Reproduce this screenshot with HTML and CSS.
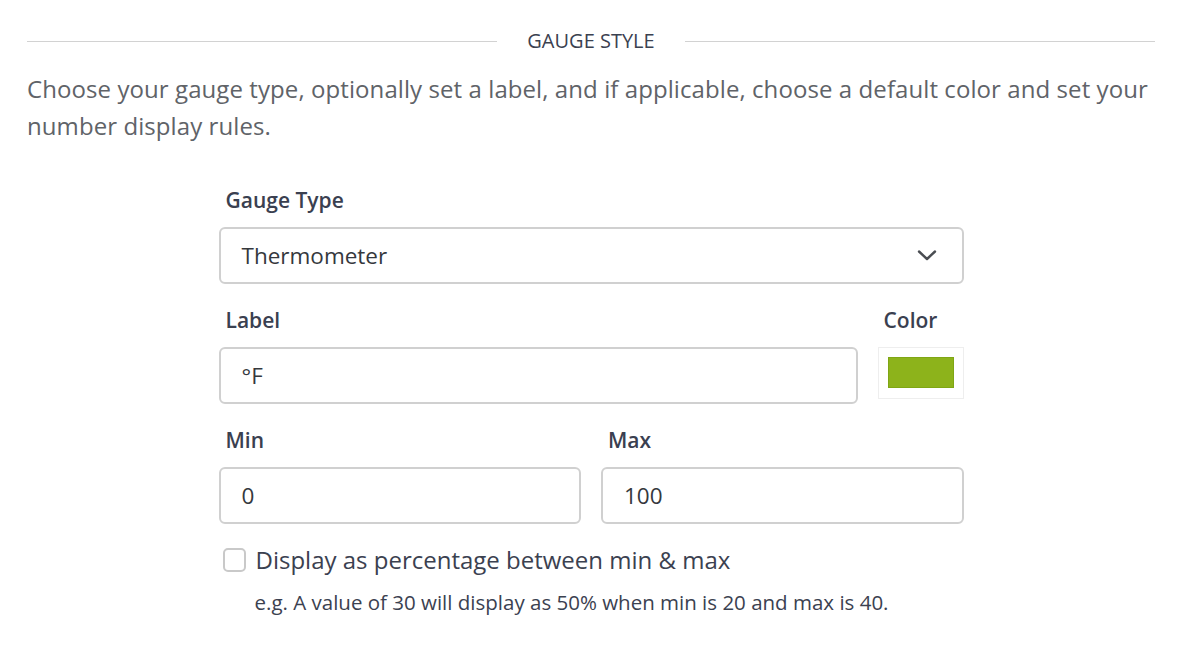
FILE: index.html
```html
<!DOCTYPE html>
<html lang="en">
<head>
<meta charset="utf-8">
<title>Gauge Style</title>
<link rel="stylesheet" href="styles.css">
</head>
<body>
<div class="page">
  <div class="section-head">
    <span class="rule"></span>
    <span class="head-text">GAUGE STYLE</span>
    <span class="rule"></span>
  </div>
  <p class="desc">Choose your gauge type, optionally set a label, and if applicable, choose a default color and set your number display rules.</p>

  <div class="form">
    <div class="field">
      <div class="label">Gauge Type</div>
      <div class="control select">
        <span>Thermometer</span>
        <svg class="chev" width="20" height="13" viewBox="0 0 20 13"><path d="M2 2.5 L10 10 L18 2.5" fill="none" stroke="#4a4d52" stroke-width="2.4" stroke-linecap="round" stroke-linejoin="round"/></svg>
      </div>
    </div>

    <div class="row">
      <div class="field grow">
        <div class="label">Label</div>
        <div class="control"><span>°F</span></div>
      </div>
      <div class="field color-field">
        <div class="label">Color</div>
        <div class="swatch-box"><div class="swatch"></div></div>
      </div>
    </div>

    <div class="row">
      <div class="field grow">
        <div class="label">Min</div>
        <div class="control"><span>0</span></div>
      </div>
      <div class="field grow">
        <div class="label">Max</div>
        <div class="control"><span>100</span></div>
      </div>
    </div>

    <div class="check-row">
      <span class="checkbox"></span>
      <span class="check-text">Display as percentage between min &amp; max</span>
    </div>
    <div class="help">e.g. A value of 30 will display as 50% when min is 20 and max is 40.</div>
  </div>
</div>
</body>
</html>
```

FILE: styles.css
```css
html, body {
  margin: 0;
  padding: 0;
  background: #ffffff;
}
body {
  font-family: "Open Sans", "Noto Sans", "Liberation Sans", sans-serif;
  color: #3b4150;
}
.page {
  width: 1128px;
  margin-left: 27px;
  padding-top: 29px;
}
.section-head {
  display: flex;
  align-items: center;
  height: 24px;
  gap: 30px;
}
.rule {
  flex: 1;
  height: 1px;
  background: #d2d2d2;
}
.head-text {
  font-size: 20px;
  line-height: 24px;
  color: #3b4150;
}
.desc {
  margin: 17px 0 0 0;
  font-size: 24px;
  letter-spacing: 0.08px;
  line-height: 37px;
  color: #606368;
}
.form {
  width: 745px;
  margin: 42px auto 0 auto;
  display: flex;
  flex-direction: column;
  gap: 22px;
}
.row {
  display: flex;
  gap: 20px;
}
.grow {
  flex: 1;
}
.label {
  font-size: 21px;
  font-weight: 600;
  line-height: 28px;
  padding-left: 7px;
  margin-bottom: 13px;
  color: #3a4050;
}
.control {
  box-sizing: border-box;
  height: 57px;
  border: 2px solid #d0d0d0;
  border-radius: 6px;
  display: flex;
  align-items: center;
  padding: 0 24px 0 21px;
  font-size: 22.5px;
  color: #35383d;
}
.select {
  justify-content: space-between;
}
.chev {
  display: block;
  margin-right: 1px;
}
.color-field {
  width: 86px;
}
.color-field .label {
  padding-left: 6px;
}
.swatch-box {
  box-sizing: border-box;
  height: 52px;
  border: 1px solid #eeeeee;
  padding: 9px;
}
.swatch {
  height: 31px;
  background: #8db31b;
  border: 1px solid #7fa614;
  box-sizing: border-box;
}
.check-row {
  display: flex;
  align-items: center;
  gap: 10px;
  padding-left: 4px;
  height: 30px;
  margin-top: -1px;
}
.checkbox {
  box-sizing: border-box;
  width: 23px;
  height: 24px;
  border: 2px solid #c9c9c9;
  border-radius: 5px;
  background: #fff;
}
.check-text {
  font-size: 24px;
  line-height: 30px;
  color: #3b4150;
}
.help {
  margin-top: -8px;
  padding-left: 36px;
  font-size: 20.5px;
  line-height: 26px;
  color: #3b4150;
}
```
